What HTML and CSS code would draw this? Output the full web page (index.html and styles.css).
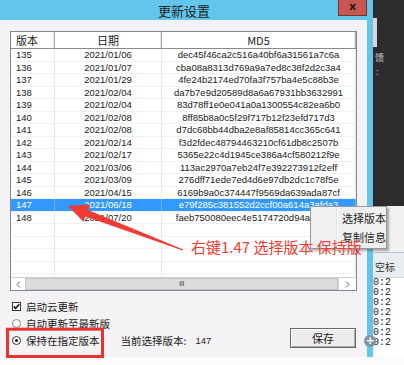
FILE: index.html
```html
<!DOCTYPE html>
<html lang="zh-CN">
  <head>
    <meta charset="UTF-8" />
    <title>更新设置</title>
    <link rel="stylesheet" href="styles.css">
  </head>
  <body>
    <div class="screen">
      <div class="top">
        <div class="window">
          <div class="titlebar">
            <div class="title">更新设置</div>
            <div class="close">x</div>
          </div>
          <div class="body">
            <div class="list">
              <div class="head">
                <div class="hc left">版本</div>
                <div class="hc">日期</div>
                <div class="hc">MD5</div>
              </div>
              <div class="rows">
                <div class="row"><span class="c left">135</span><span class="c">2021/01/06</span><span class="c">dec45f46ca2c516a40bf6a31561a7c6a</span></div>
                <div class="row"><span class="c left">136</span><span class="c">2021/01/07</span><span class="c">cba08a8313d769a9a7ed8c38f2d2c3a4</span></div>
                <div class="row"><span class="c left">137</span><span class="c">2021/01/29</span><span class="c">4fe24b2174ed70fa3f757ba4e5c88b3e</span></div>
                <div class="row"><span class="c left">138</span><span class="c">2021/02/04</span><span class="c">da7b7e9d20589d8a6a67931bb3632991</span></div>
                <div class="row"><span class="c left">139</span><span class="c">2021/02/04</span><span class="c">83d78ff1e0e041a0a1300554c82ea6b0</span></div>
                <div class="row"><span class="c left">140</span><span class="c">2021/02/08</span><span class="c">8ff85b8a0c5f29f717b12f23efd717d3</span></div>
                <div class="row"><span class="c left">141</span><span class="c">2021/02/08</span><span class="c">d7dc68bb44dba2e8af85814cc365c641</span></div>
                <div class="row"><span class="c left">142</span><span class="c">2021/02/14</span><span class="c">f3d2fdec48794463210cf61db8c2507b</span></div>
                <div class="row"><span class="c left">143</span><span class="c">2021/02/17</span><span class="c">5365e22c4d1945ce386a4cf580212f9e</span></div>
                <div class="row"><span class="c left">144</span><span class="c">2021/03/06</span><span class="c">113ac2970a7eb24f7e392273912f2eff</span></div>
                <div class="row"><span class="c left">145</span><span class="c">2021/03/09</span><span class="c">276dff71ede7ed4d6e97db2dc1c78f5e</span></div>
                <div class="row"><span class="c left">146</span><span class="c">2021/04/15</span><span class="c">6169b9a0c374447f9569da639ada87cf</span></div>
                <div class="row sel"><span class="c left">147</span><span class="c">2021/06/18</span><span class="c">e79f285c381552d2ccf00a614a3afda3</span></div>
                <div class="row"><span class="c left">148</span><span class="c">2021/07/20</span><span class="c">faeb750080eec4e5174720d94a1c5e27</span></div>
                <div class="row"><span class="c"></span><span class="c"></span><span class="c"></span></div>
                <div class="row"><span class="c"></span><span class="c"></span><span class="c"></span></div>
                <div class="row"><span class="c"></span><span class="c"></span><span class="c"></span></div>
                <div class="row"><span class="c"></span><span class="c"></span><span class="c"></span></div>
                <div class="row"><span class="c"></span><span class="c"></span><span class="c"></span></div>
              </div>
              <div class="hscroll">
                <div class="arrow">
                  <svg width="5" height="7" viewBox="0 0 5 7"><polyline points="4,0.5 1,3.5 4,6.5" fill="none" stroke="#606060" stroke-width="1"/></svg>
                </div>
                <div class="thumb"><span class="grip">III</span></div>
                <div class="arrow">
                  <svg width="5" height="7" viewBox="0 0 5 7"><polyline points="1,0.5 4,3.5 1,6.5" fill="none" stroke="#606060" stroke-width="1"/></svg>
                </div>
              </div>
            </div>
            <div class="footer">
              <div class="opt">
                <span class="check">
                  <svg width="7" height="7" viewBox="0 0 7 7"><polyline points="0.8,3.4 2.6,5.4 6.2,1.2" fill="none" stroke="#111" stroke-width="1.6"/></svg>
                </span>
                <span>启动云更新</span>
              </div>
              <div class="opt"><span class="radio"></span><span>自动更新至最新版</span></div>
              <div class="opt">
                <span class="radio on"></span><span>保持在指定版本</span>
                <span class="current">当前选择版本:</span><span class="num">147</span>
              </div>
              <div class="save">保存</div>
            </div>
          </div>
        </div>
        <div class="side">
          <div class="dark">
            <div class="sthumb"></div>
            <div class="glyph">馈</div>
            <div class="colon">:</div>
          </div>
          <div class="pale"></div>
          <div class="sheet">
            <div class="shead">空标</div>
            <div class="srow">0:2</div>
            <div class="srow">0:2</div>
            <div class="srow">0:2</div>
            <div class="srow">0:2</div>
            <div class="srow">0:2</div>
            <div class="srow">0:2</div>
            <div class="srow">0:2</div>
          </div>
        </div>
      </div>
      <div class="floor"></div>

      <!-- 右键菜单 -->
      <div class="menu">
        <div class="mi">选择版本</div>
        <div class="mi">复制信息</div>
      </div>
      <div class="zoomicon">+</div>

      <!-- 标注 -->
      <svg class="annot" width="404" height="365" viewBox="0 0 404 365">
        <polygon points="68,206 90,204.5 88,210 183.2,249.4 182.8,250.6 85.4,216.5 83.5,221.8" fill="#ee3b34"/>
        <rect x="7.5" y="329.2" width="95" height="27.3" fill="none" stroke="#e8332f" stroke-width="3"/>
      </svg>
      <div class="note">右键1.47 选择版本 保持版</div>
    </div>
  </body>
</html>
```

FILE: styles.css
```css
* {
  margin: 0;
  padding: 0;
  box-sizing: border-box;
}
body {
  width: 404px;
  height: 365px;
  overflow: hidden;
  background: #fbfbfb;
  font-family: "Noto Sans CJK SC", sans-serif;
  color: #1a1a1a;
}
.screen {
  position: relative;
  width: 404px;
  height: 365px;
}
.top {
  display: flex;
  height: 357px;
}
.window {
  width: 373px;
  display: flex;
  flex-direction: column;
  background: #62c6ec;
}
.titlebar {
  height: 20px;
  display: flex;
  align-items: flex-start;
}
.title {
  flex: 1;
  padding-left: 30px;
  text-align: center;
  font-size: 13px;
  line-height: 22px;
  color: #1e1e1e;
}
.close {
  width: 29px;
  height: 16px;
  margin-right: 6px;
  background: #c8574f;
  border: 1px solid #7d2f2a;
  border-top: 0;
  font-family: "DejaVu Sans", sans-serif;
  font-weight: bold;
  font-size: 11px;
  line-height: 13px;
  text-align: center;
  color: #1a1a1a;
}
.body {
  flex: 1;
  margin-right: 6px;
  padding: 11px 10px 0 10px;
  background: #f5f2f5;
}
.list {
  height: 260px;
  border: 1px solid #828790;
  background: #fff;
  display: flex;
  flex-direction: column;
}
.head {
  display: grid;
  grid-template-columns: 44px 107px 1fr;
  height: 17px;
  border-bottom: 1px solid #8a8a8a;
}
.hc {
  font-size: 11px;
  line-height: 16px;
  text-align: center;
  border-right: 1px solid #a8a8a8;
  box-shadow: inset -1px 0 0 #e8e8e8;
}
.hc.left {
  text-align: left;
  padding-left: 5px;
}
.rows {
  height: 228px;
  overflow: hidden;
}
.row {
  display: grid;
  grid-template-columns: 44px 107px 1fr;
  height: 12.5px;
  border-bottom: 1px solid #f0f0f0;
}
.c {
  font-family: "Liberation Sans", sans-serif;
  font-size: 9.5px;
  line-height: 12px;
  text-align: center;
  white-space: nowrap;
  overflow: hidden;
  border-right: 1px solid #e8e8e8;
}
.c.left {
  text-align: left;
  padding-left: 5px;
}
.row.sel {
  background: #3399ff;
  color: #fff;
}
.row.sel .c {
  border-right-color: #6fb6ff;
}
.hscroll {
  height: 13px;
  display: flex;
  background: #f0f0f0;
  border-top: 1px solid #d4d4d4;
}
.arrow {
  width: 14px;
  display: flex;
  align-items: center;
  justify-content: center;
  background: #fff;
}
.arrow:last-child {
  width: 18px;
  border-left: 1px solid #d0d0d0;
}
.thumb {
  flex: 1;
  background: #dcdcdc;
  border: 1px solid #c4c4c4;
  display: flex;
  align-items: center;
  justify-content: center;
}
.grip {
  font-family: "Liberation Sans", sans-serif;
  font-size: 8px;
  line-height: 8px;
  color: #555;
  letter-spacing: -0.5px;
}
.footer {
  margin-top: 7px;
  display: grid;
  grid-template-columns: 1fr auto;
  grid-template-rows: 17px 17px 17px;
}
.opt {
  grid-column: 1;
  display: flex;
  align-items: center;
  padding-left: 2px;
  font-size: 10.5px;
  line-height: 17px;
}
.check,
.radio {
  width: 9px;
  height: 9px;
  margin-right: 5px;
  border: 1px solid #3a3a3a;
  background: #fff;
  display: flex;
  align-items: center;
  justify-content: center;
}
.radio {
  border-radius: 50%;
  border-color: #8a8a8a;
}
.radio.on {
  border-color: #333;
}
.radio.on::after {
  content: "";
  width: 3px;
  height: 3px;
  border-radius: 50%;
  background: #111;
}
.current {
  margin-left: 21px;
}
.num {
  margin-left: 9px;
  font-family: "Liberation Sans", sans-serif;
  font-size: 9.5px;
}
.save {
  grid-column: 2;
  grid-row: 2 / 4;
  align-self: end;
  width: 66px;
  height: 20px;
  margin: 0 1px 1px 0;
  background: #ececec;
  border: 1px solid #6a6a6a;
  box-shadow: inset 1px 1px 0 #fff, inset -1px -1px 0 #a8a8a8;
  font-size: 11px;
  line-height: 18px;
  text-align: center;
}
.side {
  width: 31px;
  display: flex;
  flex-direction: column;
  background: #fff;
}
.dark {
  height: 206px;
  background: #2c2c2c;
  padding-top: 18px;
}
.sthumb {
  width: 4px;
  height: 29px;
  background: #d6d6d6;
}
.glyph {
  margin: 6px 0 0 2px;
  font-size: 9px;
  line-height: 10px;
  color: #cfcfcf;
}
.colon {
  margin: 4px 0 0 3px;
  font-size: 9px;
  line-height: 10px;
  color: #e0a040;
}
.pale {
  height: 46px;
  background: #f0f0f0;
}
.sheet {
  flex: 1;
  border-top: 1px solid #b9c3cc;
}
.shead {
  height: 25px;
  padding: 8px 0 0 2px;
  background: #e9edf1;
  border-bottom: 1px solid #cfd6dc;
  font-size: 10px;
  line-height: 12px;
  color: #333;
}
.srow {
  height: 10px;
  font-family: "Liberation Mono", monospace;
  font-size: 10px;
  line-height: 10px;
  color: #222;
}
.floor {
  height: 8px;
  background: #fbfbfb;
}
.menu {
  position: absolute;
  left: 310px;
  top: 206px;
  width: 77px;
  height: 43px;
  padding: 2px 0 0 31px;
  white-space: nowrap;
  background: #f0f0f0 linear-gradient(90deg, transparent 25px, #e2e2e2 25px, #e2e2e2 26px, #fff 26px, #fff 27px, transparent 27px);
  border: 1px solid #979797;
  box-shadow: 2px 2px 2px rgba(0, 0, 0, 0.3);
}
.mi {
  font-size: 11px;
  line-height: 19px;
  color: #1e1e1e;
}
.zoomicon {
  position: absolute;
  left: 364px;
  top: 335px;
  width: 12px;
  height: 12px;
  border-radius: 50%;
  background: #7d95a8;
  color: #fff;
  font-family: "DejaVu Sans", sans-serif;
  font-weight: bold;
  font-size: 11px;
  line-height: 12px;
  text-align: center;
}
.annot {
  position: absolute;
  left: 0;
  top: 0;
}
.note {
  position: absolute;
  left: 191px;
  top: 238px;
  font-size: 15px;
  line-height: 17px;
  color: #ee3b34;
  white-space: nowrap;
}
```
